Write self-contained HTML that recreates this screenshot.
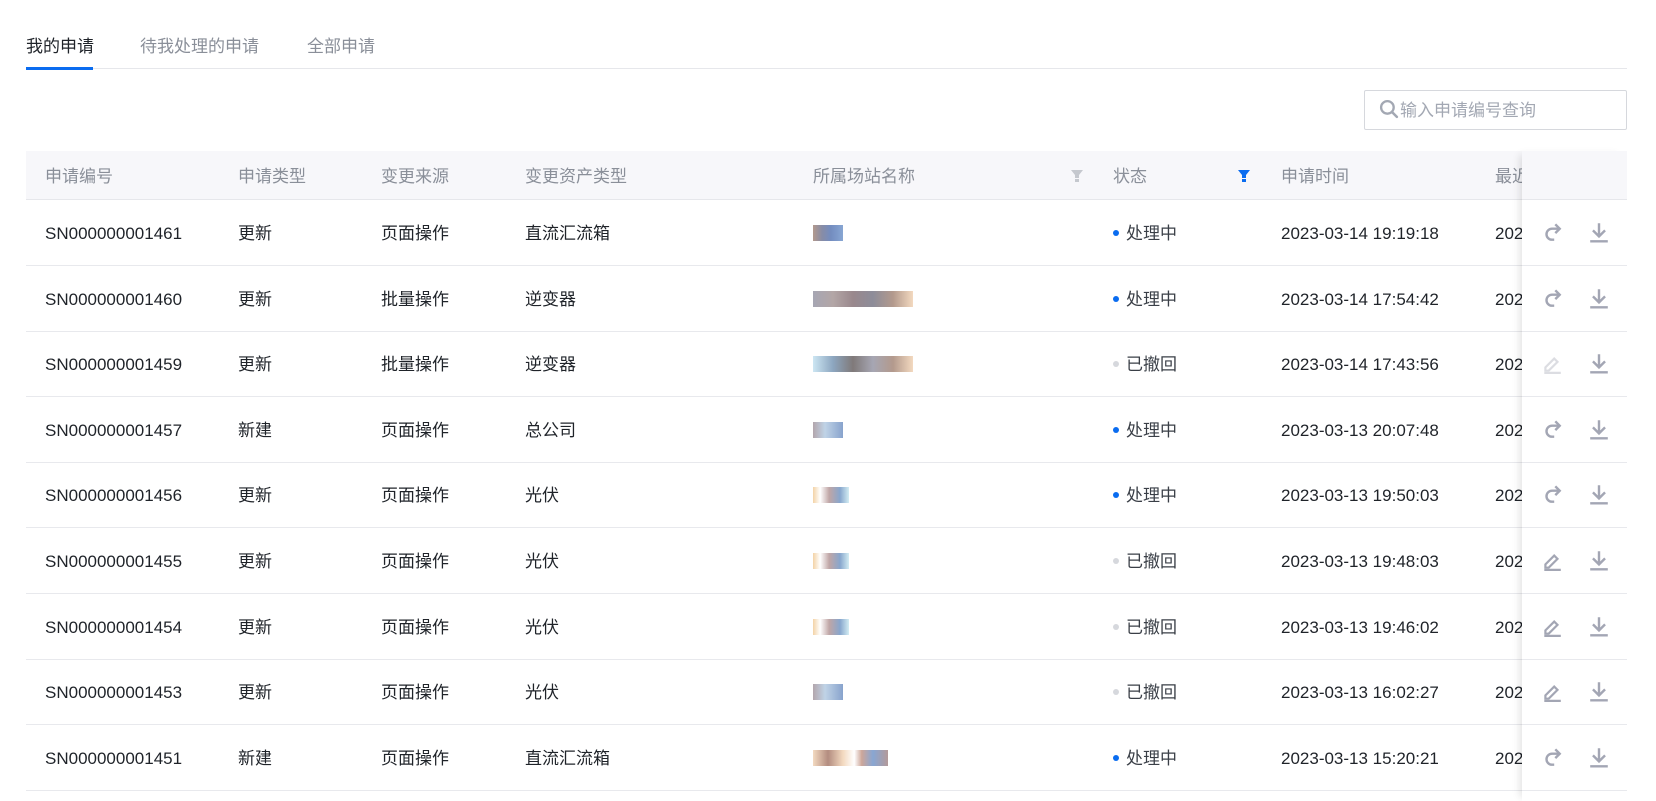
<!DOCTYPE html>
<html><head><meta charset="utf-8"><style>
*{margin:0;padding:0;box-sizing:border-box}
body{width:1656px;height:801px;background:#fff;font-family:"Liberation Sans","Noto Sans CJK SC",sans-serif;font-size:17px;line-height:22px;color:#1f2329;position:relative;overflow:hidden}
.a{position:absolute;white-space:nowrap;line-height:22px}
.tab{top:36px;color:#8a8f99}
.hd{color:#8a8f99}
.row{position:absolute;left:26px;width:1601px;height:66px;border-bottom:1px solid #e8e9ed}
.row .a{top:23px}
.dot{display:inline-block;width:6px;height:6px;border-radius:3px;margin-right:7px;vertical-align:3px}
.blob{position:absolute;height:16px}
</style></head><body>
<div class="a tab" style="left:26px;color:#1f2329">我的申请</div>
<div class="a tab" style="left:140px">待我处理的申请</div>
<div class="a tab" style="left:307px">全部申请</div>
<div class="a" style="left:26px;top:68px;width:1601px;height:1px;background:#e6e7eb"></div>
<div class="a" style="left:26px;top:67px;width:67px;height:3px;background:#0a6cf0"></div>

<div class="a" style="left:1364px;top:90px;width:263px;height:40px;border:1px solid #d6d8dd;border-radius:2px"></div>
<svg class="a" style="left:1379px;top:99px" width="21" height="21" viewBox="0 0 20 20"><circle cx="8" cy="8" r="6" fill="none" stroke="#a3a8b3" stroke-width="2.2"/><path d="M12.5 12.5 L17 17" stroke="#a3a8b3" stroke-width="2.4" stroke-linecap="round"/></svg>
<div class="a" style="left:1400px;top:100px;color:#a3a8b3">输入申请编号查询</div>

<div class="a" style="left:26px;top:151px;width:1601px;height:49px;background:#f7f7fa;border-bottom:1px solid #e6e7eb"></div>
<div class="a hd" style="left:45px;top:166px">申请编号</div>
<div class="a hd" style="left:238px;top:166px">申请类型</div>
<div class="a hd" style="left:381px;top:166px">变更来源</div>
<div class="a hd" style="left:525px;top:166px">变更资产类型</div>
<div class="a hd" style="left:813px;top:166px">所属场站名称</div>
<svg class="a" style="left:1071px;top:170px" width="12" height="13" viewBox="0 0 12 13"><path d="M0 0H12L8 5V8H4V5Z" fill="#c5c8ce"/><rect x="4" y="9" width="4" height="3" fill="#c5c8ce"/></svg>
<div class="a hd" style="left:1113px;top:166px">状态</div>
<svg class="a" style="left:1238px;top:170px" width="12" height="13" viewBox="0 0 12 13"><path d="M0 0H12L8 5V8H4V5Z" fill="#0a6cf0"/><rect x="4" y="9" width="4" height="3" fill="#0a6cf0"/></svg>
<div class="a hd" style="left:1281px;top:166px">申请时间</div>
<div class="a hd" style="left:1495px;top:166px">最近</div>

<div id="rows"></div>
<div class="a" style="left:1522px;top:151px;width:105px;height:650px;background:#fff;box-shadow:-6px 0 8px -4px rgba(0,0,0,0.12)"></div>
<div class="a" style="left:1522px;top:151px;width:105px;height:49px;background:#f7f7fa;border-bottom:1px solid #e6e7eb"></div>
<div id="ops"></div>
<script>
var d=[["SN000000001461","更新","页面操作","直流汇流箱",1,"2023-03-14 19:19:18",0],
["SN000000001460","更新","批量操作","逆变器",1,"2023-03-14 17:54:42",1],
["SN000000001459","更新","批量操作","逆变器",0,"2023-03-14 17:43:56",2],
["SN000000001457","新建","页面操作","总公司",1,"2023-03-13 20:07:48",3],
["SN000000001456","更新","页面操作","光伏",1,"2023-03-13 19:50:03",4],
["SN000000001455","更新","页面操作","光伏",0,"2023-03-13 19:48:03",4],
["SN000000001454","更新","页面操作","光伏",0,"2023-03-13 19:46:02",4],
["SN000000001453","更新","页面操作","光伏",0,"2023-03-13 16:02:27",3],
["SN000000001451","新建","页面操作","直流汇流箱",1,"2023-03-13 15:20:21",5]];
var blobs=[
"width:30px;background:linear-gradient(90deg,#a08070,#6a7090 30%,#5070b0 60%,#6a90c8)",
"width:100px;background:linear-gradient(90deg,#9090a0,#a09090 20%,#806a70 40%,#707080 60%,#a08070 80%,#f0d0b0)",
"width:100px;background:linear-gradient(90deg,#c0e0f0,#7090b0 20%,#605858 40%,#9090a0 60%,#a08070 80%,#f0d0b0)",
"width:30px;background:linear-gradient(90deg,#a09098,#b0c8e0 40%,#6a8cc0)",
"width:36px;background:linear-gradient(90deg,#f0c890,#fff 20%,#b09090 45%,#6a90c0 75%,#c8e8f0)",
"width:75px;background:linear-gradient(90deg,#f0d0b0,#a07060 20%,#f0d0b0 40%,#fff 55%,#c09080 65%,#6a90c8 80%,#a08080)"];
var h="",o="";
for(var i=0;i<d.length;i++){var r=d[i],t=200+i*65.6;
h+='<div class="row" style="top:'+t+'px"><div class="a" style="left:19px">'+r[0]+'</div><div class="a" style="left:212px">'+r[1]+'</div><div class="a" style="left:355px">'+r[2]+'</div><div class="a" style="left:499px">'+r[3]+'</div>'+
'<div class="blob" style="left:787px;top:25px;opacity:.8;'+blobs[r[6]]+'"></div>'+
'<div class="a" style="left:1087px;color:#3a3f47"><span class="dot" style="background:'+(r[4]?'#0a6cf0':'#d6d8dd')+'"></span>'+(r[4]?'处理中':'已撤回')+'</div><div class="a" style="left:1255px">'+r[5]+'</div><div class="a" style="left:1469px">202</div></div>';
var c='#a3a6b4';
var ic1=r[4]?'<path d="M13 3 L17 7 L13 11 M17 7 H10 A5 5 0 0 0 10 17 H12" fill="none" stroke="'+c+'" stroke-width="2.2"/>':
'<path d="M4 14 L12 6 L15 9 L7 17 H4Z" fill="none" stroke="'+(i==2?'#dcdde2':c)+'" stroke-width="2"/><path d="M3 19 H18" stroke="'+(i==2?'#dcdde2':c)+'" stroke-width="2.2"/>';
o+='<svg class="a" style="left:1541px;top:'+(t+21)+'px" width="22" height="22" viewBox="0 0 20 20">'+ic1+'</svg>'+
'<svg class="a" style="left:1588px;top:'+(t+21)+'px" width="22" height="22" viewBox="0 0 20 20"><path d="M10 2 V14 M4.5 8.5 L10 14 L15.5 8.5" fill="none" stroke="'+c+'" stroke-width="2.2"/><path d="M2 18.5 H18" stroke="'+c+'" stroke-width="2.2"/></svg>'+
'<div class="a" style="left:1522px;top:'+(t+65)+'px;width:105px;height:1px;background:#e8e9ed"></div>';}
document.getElementById("rows").innerHTML=h;document.getElementById("ops").innerHTML=o;
</script>
</body></html>
